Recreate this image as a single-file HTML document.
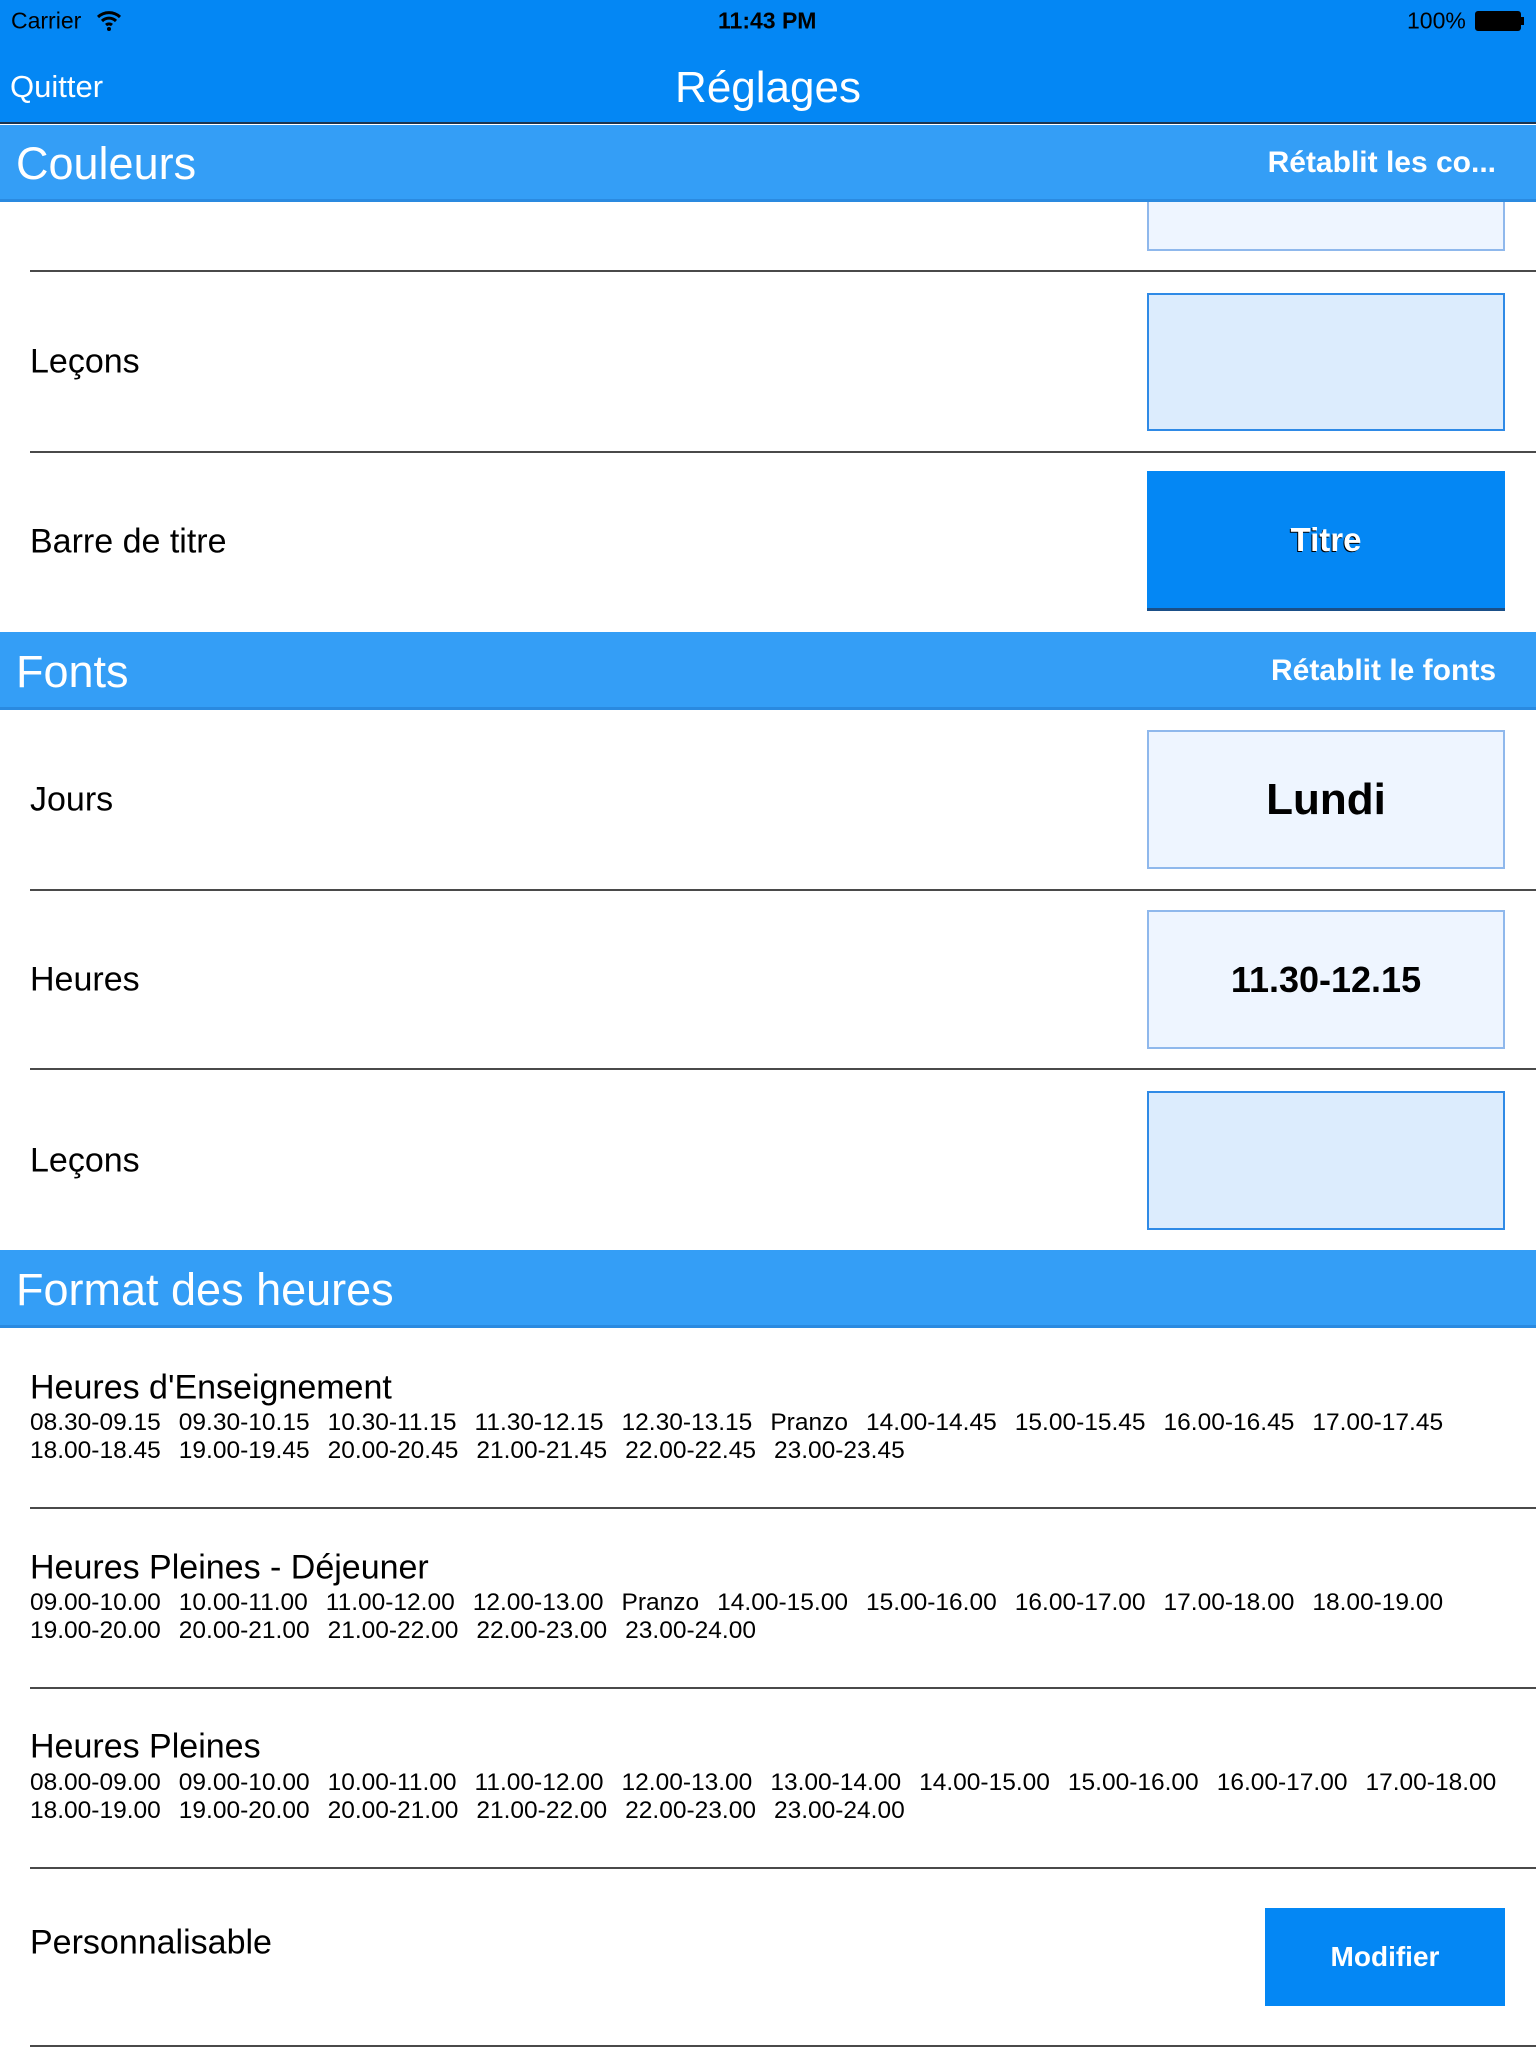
<!DOCTYPE html>
<html><head><meta charset="utf-8">
<style>
*{margin:0;padding:0;box-sizing:border-box}
body{width:1536px;height:2048px;background:#fff;font-family:"Liberation Sans",Arial,sans-serif;position:relative;overflow:hidden;color:#000}
.a{position:absolute;white-space:nowrap}
.c{transform:translateY(-50%)}
.sep{position:absolute;left:30px;right:0;height:2px;background:#4a4a4a}
.hdr{position:absolute;left:0;width:1536px;background:#349ef6;border-bottom:3px solid #2a8ae0}
.box{position:absolute;left:1147px;width:358px;border:2px solid #8fb8ec;background:#eef5ff;display:flex;align-items:center;justify-content:center;font-weight:bold}
.lbl{font-size:34px;left:30px}
.hr{font-size:24.5px;left:30px;word-spacing:2.2px}
</style></head><body>
<div class="a" style="left:0;top:0;width:1536px;height:124px;background:#0487f4;border-bottom:2px solid #1c3550"></div>
<div class="a c" style="left:11px;top:21px;font-size:23px">Carrier</div>
<svg class="a" style="left:96px;top:8px" width="26" height="24" viewBox="0 0 26 24"><path d="M2 9a16 16 0 0 1 22 0M6 13a10 10 0 0 1 14 0M10 17a4.5 4.5 0 0 1 6 0" stroke="#000" stroke-width="3" fill="none"/><circle cx="13" cy="21" r="2" fill="#000"/></svg>
<div class="a c" style="left:718px;top:21px;font-size:23px;font-weight:bold">11:43 PM</div>
<div class="a c" style="left:1407px;top:21px;font-size:23px">100%</div>
<div class="a" style="left:1475px;top:11px;width:46px;height:20px;border:2px solid #000;border-radius:3px;background:#000"></div>
<div class="a" style="left:1521px;top:17px;width:3px;height:8px;background:#000"></div>
<div class="a c" style="left:10px;top:87px;font-size:31px;color:#fff">Quitter</div>
<div class="a c" style="left:0;width:1536px;text-align:center;top:88px;font-size:44px;color:#fff">Réglages</div>

<div class="box" style="top:200px;height:51px;border-top:none"></div>
<div class="hdr" style="top:125px;height:77px"></div>
<div class="a c" style="left:16px;top:164px;font-size:45px;color:#fff">Couleurs</div>
<div class="a c" style="right:40px;top:163px;font-size:30px;font-weight:bold;color:#fff">Rétablit les co...</div>

<div class="sep" style="top:270px"></div>
<div class="a c lbl" style="top:362px">Leçons</div>
<div class="box" style="top:293px;height:138px;background:#dcecfd;border-color:#2f8ae6"></div>
<div class="sep" style="top:451px"></div>
<div class="a c lbl" style="top:542px">Barre de titre</div>
<div class="box" style="top:471px;height:140px;background:#0487f4;border:none;border-bottom:3px solid #1a4f88;color:#fff;font-size:33px;text-shadow:-1px 1px 0 #000">Titre</div>

<div class="hdr" style="top:632px;height:78px"></div>
<div class="a c" style="left:16px;top:672px;font-size:45px;color:#fff">Fonts</div>
<div class="a c" style="right:40px;top:671px;font-size:30px;font-weight:bold;color:#fff">Rétablit le fonts</div>

<div class="a c lbl" style="top:800px">Jours</div>
<div class="box" style="top:730px;height:139px;font-size:44px">Lundi</div>
<div class="sep" style="top:889px"></div>
<div class="a c lbl" style="top:980px">Heures</div>
<div class="box" style="top:910px;height:139px;font-size:36px">11.30-12.15</div>
<div class="sep" style="top:1068px"></div>
<div class="a c lbl" style="top:1161px">Leçons</div>
<div class="box" style="top:1091px;height:139px;background:#dcecfd;border-color:#2f8ae6"></div>

<div class="hdr" style="top:1250px;height:78px"></div>
<div class="a c" style="left:16px;top:1290px;font-size:45px;color:#fff">Format des heures</div>

<div class="a c lbl" style="top:1388px">Heures d'Enseignement</div>
<div class="a c hr" style="top:1423px">08.30-09.15&nbsp; 09.30-10.15&nbsp; 10.30-11.15&nbsp; 11.30-12.15&nbsp; 12.30-13.15&nbsp; Pranzo&nbsp; 14.00-14.45&nbsp; 15.00-15.45&nbsp; 16.00-16.45&nbsp; 17.00-17.45</div>
<div class="a c hr" style="top:1451px">18.00-18.45&nbsp; 19.00-19.45&nbsp; 20.00-20.45&nbsp; 21.00-21.45&nbsp; 22.00-22.45&nbsp; 23.00-23.45</div>
<div class="sep" style="top:1507px"></div>
<div class="a c lbl" style="top:1568px">Heures Pleines - Déjeuner</div>
<div class="a c hr" style="top:1603px">09.00-10.00&nbsp; 10.00-11.00&nbsp; 11.00-12.00&nbsp; 12.00-13.00&nbsp; Pranzo&nbsp; 14.00-15.00&nbsp; 15.00-16.00&nbsp; 16.00-17.00&nbsp; 17.00-18.00&nbsp; 18.00-19.00</div>
<div class="a c hr" style="top:1631px">19.00-20.00&nbsp; 20.00-21.00&nbsp; 21.00-22.00&nbsp; 22.00-23.00&nbsp; 23.00-24.00</div>
<div class="sep" style="top:1687px"></div>
<div class="a c lbl" style="top:1747px">Heures Pleines</div>
<div class="a c hr" style="top:1783px">08.00-09.00&nbsp; 09.00-10.00&nbsp; 10.00-11.00&nbsp; 11.00-12.00&nbsp; 12.00-13.00&nbsp; 13.00-14.00&nbsp; 14.00-15.00&nbsp; 15.00-16.00&nbsp; 16.00-17.00&nbsp; 17.00-18.00</div>
<div class="a c hr" style="top:1811px">18.00-19.00&nbsp; 19.00-20.00&nbsp; 20.00-21.00&nbsp; 21.00-22.00&nbsp; 22.00-23.00&nbsp; 23.00-24.00</div>
<div class="sep" style="top:1867px"></div>
<div class="a c lbl" style="top:1943px">Personnalisable</div>
<div class="a" style="left:1265px;top:1908px;width:240px;height:98px;background:#0487f4;color:#fff;font-weight:bold;font-size:28px;display:flex;align-items:center;justify-content:center">Modifier</div>
<div class="sep" style="top:2045px"></div>
</body></html>
